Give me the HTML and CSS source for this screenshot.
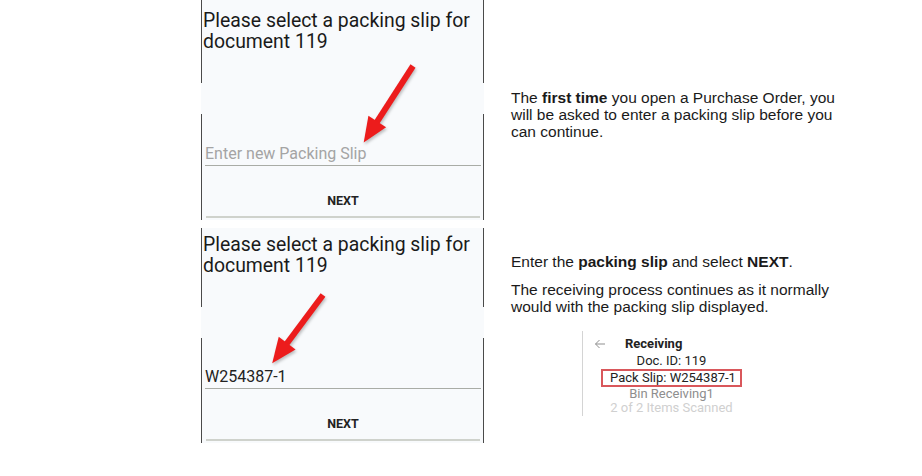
FILE: index.html
```html
<!DOCTYPE html>
<html>
<head>
<meta charset="utf-8">
<link rel="stylesheet" href="styles.css">
</head>
<body>
<div class="page">
  <div class="phone phone-one">
    <div class="title">Please select a packing slip for document 119</div>
    <div class="field placeholder">Enter new Packing Slip</div>
    <div class="next">NEXT</div>
    <svg class="arrow" width="283" height="220" viewBox="0 0 283 220">
      <g transform="translate(212 66) rotate(122.8)">
        <rect x="0" y="-3" width="68" height="6" fill="#ec1c1c"/>
        <polygon points="66,-10.5 91,0 66,10.5" fill="#ec1c1c"/>
      </g>
    </svg>
  </div>
  <div class="note note-one">
    <p>The <b>first time</b> you open a Purchase Order, you will be asked to enter a packing slip before you can continue.</p>
  </div>

  <div class="phone phone-two">
    <div class="title">Please select a packing slip for document 119</div>
    <div class="field value">W254387-1</div>
    <div class="next">NEXT</div>
    <svg class="arrow" width="283" height="215" viewBox="0 0 283 215">
      <g transform="translate(122 67) rotate(126.7)">
        <rect x="0" y="-3" width="62" height="6" fill="#ec1c1c"/>
        <polygon points="60,-10.5 85,0 60,10.5" fill="#ec1c1c"/>
      </g>
    </svg>
  </div>
  <div class="note note-two">
    <p>Enter the <b>packing slip</b> and select <b>NEXT</b>.</p>
    <p class="second">The receiving process continues as it normally would with the packing slip displayed.</p>
    <div class="receiving">
      <div class="rec-head">
        <svg class="back" width="12" height="10" viewBox="0 0 12 10">
          <path d="M11 5H1.5M5.5 1L1.5 5L5.5 9" fill="none" stroke="#8f8f8f" stroke-width="1"/>
        </svg>
        <span class="rec-title">Receiving</span>
      </div>
      <div class="rec-line">Doc. ID: 119</div>
      <div class="rec-line"><span class="slip">Pack Slip: W254387-1</span></div>
      <div class="rec-line faded">Bin Receiving1</div>
      <div class="rec-line faded2">2 of 2 Items Scanned</div>
    </div>
  </div>
</div>
</body>
</html>
```

FILE: styles.css
```css
html, body {
  margin: 0;
  padding: 0;
  background: #ffffff;
}

.page {
  display: grid;
  grid-template-columns: 283px 1fr;
  grid-template-rows: 220px 215px;
  row-gap: 8px;
  column-gap: 27px;
  padding-left: 201px;
}

.phone {
  position: relative;
  box-sizing: border-box;
  font-family: Roboto, "Noto Sans", sans-serif;
  display: flex;
  flex-direction: column;
  background:
    linear-gradient(#4a4a4a, #4a4a4a) left top / 1px var(--gap-top) no-repeat,
    linear-gradient(#4a4a4a, #4a4a4a) left var(--gap-bottom) / 1px 100% no-repeat,
    linear-gradient(#4a4a4a, #4a4a4a) right top / 1px var(--gap-top) no-repeat,
    linear-gradient(#4a4a4a, #4a4a4a) right var(--gap-bottom) / 1px 100% no-repeat,
    #f8fafc;
}

.phone-one {
  --gap-top: 83px;
  --gap-bottom: 114px;
  padding-top: 10px;
}

.phone-two {
  --gap-top: 79px;
  --gap-bottom: 110px;
  padding-top: 6px;
}

.title {
  font-size: 19.4px;
  line-height: 21px;
  color: #1a1a1a;
  padding-left: 2px;
  height: 42px;
}

.field {
  margin: 92px 3px 0 4px;
  font-size: 16px;
  line-height: 20px;
  padding-bottom: 1px;
  border-bottom: 1px solid #a9aca6;
}

.phone-two .field {
  margin-top: 91px;
}

.placeholder {
  color: #a4a4a4;
}

.value {
  color: #222222;
}

.next {
  margin: 0 4px 0 5px;
  padding: 28px 0 8px;
  line-height: 14px;
  font-size: 12.5px;
  font-weight: 700;
  text-align: center;
  color: #222222;
  border-bottom: 2px solid #cfd2cc;
}

.arrow {
  position: absolute;
  left: 0;
  top: 0;
  filter: drop-shadow(1px 2px 1.5px rgba(0, 0, 0, 0.25));
}

.note {
  font-family: "Liberation Sans", Arial, sans-serif;
  font-size: 15.5px;
  line-height: 17px;
  color: #1a1a1a;
}

.note p {
  margin: 0;
  width: 345px;
}

.note-one {
  padding-top: 89px;
}

.note-two {
  padding-top: 25px;
}

.note-two .second {
  margin-top: 11px;
}

.receiving {
  margin: 16px 0 0 71px;
  width: 170px;
  height: 85px;
  box-sizing: border-box;
  border-left: 1px solid #d4d4d4;
  overflow: hidden;
  font-family: Roboto, "Noto Sans", sans-serif;
  font-size: 13px;
  line-height: 16px;
  color: #222222;
  background: #ffffff;
}

.rec-head {
  display: flex;
  align-items: center;
  padding-top: 4px;
  height: 18px;
}

.back {
  margin-left: 11px;
  margin-right: 19px;
}

.rec-title {
  font-weight: 700;
  font-size: 13px;
}

.rec-line {
  text-align: center;
  padding-left: 8px;
}

.slip {
  display: inline-block;
  border: 2px solid #d9575b;
  padding: 0 4px 0 7px;
  line-height: 14px;
  margin: 0;
}

.faded {
  color: #8e8e8e;
  margin-top: -1px;
}

.faded2 {
  color: #d0d0d0;
  margin-top: -2px;
}
```
